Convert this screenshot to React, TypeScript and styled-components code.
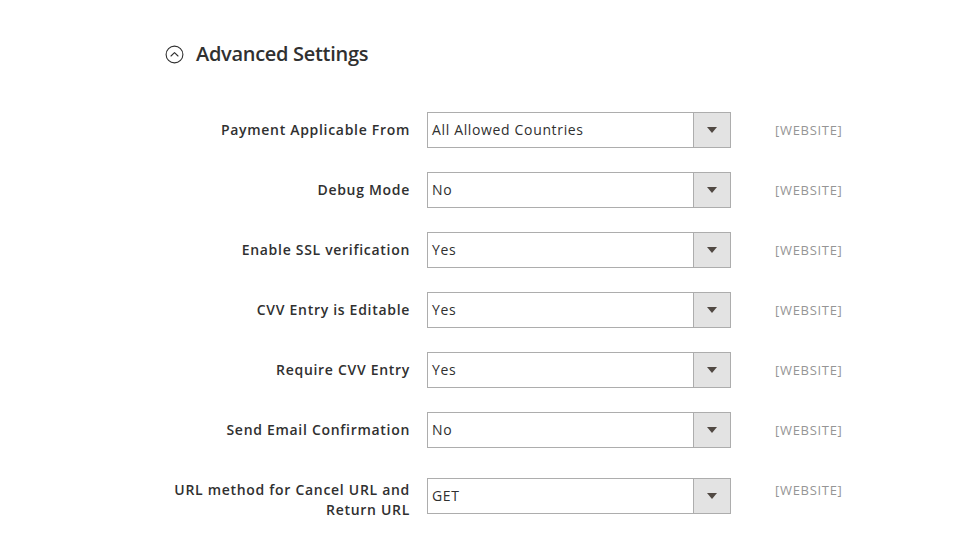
import React from "react";
import styled, { createGlobalStyle } from "styled-components";

const GlobalStyle = createGlobalStyle`
  html, body { margin: 0; padding: 0; background: #ffffff; }
  body { font-family: "Open Sans", "Noto Sans", sans-serif; color: #303030; }
  * { box-sizing: border-box; }
`;

const Page = styled.div`
  width: 954px;
  height: 558px;
  padding: 40px 0 0 160px;
  overflow: hidden;
`;

const Heading = styled.div`
  display: flex;
  align-items: center;
  gap: 12px;
  padding-left: 5px;
  font-size: 20px;
  line-height: 28px;
  font-weight: 600;
  letter-spacing: -0.3px;
  color: #303030;
`;

const Form = styled.div`
  display: flex;
  flex-direction: column;
  gap: 24px;
  margin-top: 44px;
`;

const Row = styled.div`
  display: flex;
  align-items: flex-start;
`;

const Label = styled.label`
  width: 250px;
  padding-top: 8px;
  text-align: right;
  font-size: 14px;
  line-height: 20px;
  font-weight: 600;
  letter-spacing: 0.7px;
  color: #303030;
`;

const Select = styled.div`
  align-self: center;
  margin-left: 17px;
  width: 304px;
  height: 36px;
  display: flex;
  border: 1px solid #adadad;
  background: #ffffff;
`;

const Value = styled.div`
  flex: 1;
  padding: 7px 4px 0 4px;
  font-size: 14px;
  line-height: 20px;
  letter-spacing: 0.65px;
  color: #303030;
`;

const Button = styled.div`
  width: 37px;
  border-left: 1px solid #adadad;
  background: #e3e3e3;
  display: flex;
  align-items: center;
  justify-content: center;
`;

const Arrow = styled.span`
  width: 0;
  height: 0;
  border-left: 5px solid transparent;
  border-right: 5px solid transparent;
  border-top: 6px solid #514943;
`;

const Scope = styled.div`
  margin-left: 44px;
  padding-top: 8px;
  font-size: 13px;
  line-height: 20px;
  letter-spacing: 0.7px;
  color: #959595;
`;

const rows = [
  { label: "Payment Applicable From", value: "All Allowed Countries" },
  { label: "Debug Mode", value: "No" },
  { label: "Enable SSL verification", value: "Yes" },
  { label: "CVV Entry is Editable", value: "Yes" },
  { label: "Require CVV Entry", value: "Yes" },
  { label: "Send Email Confirmation", value: "No" },
  { label: "URL method for Cancel URL and Return URL", value: "GET" },
];

const CollapseIcon = () => (
  <svg width="19" height="19" viewBox="0 0 19 19" fill="none">
    <circle cx="9.5" cy="9.5" r="8.4" stroke="#303030" strokeWidth="1.1" />
    <path d="M6 11 L9.5 7.6 L13 11" stroke="#303030" strokeWidth="1.1" strokeLinecap="round" strokeLinejoin="round" />
  </svg>
);

export default function App() {
  return (
    <>
      <GlobalStyle />
      <Page>
        <Heading>
          <CollapseIcon />
          <span>Advanced Settings</span>
        </Heading>
        <Form>
          {rows.map((r) => (
            <Row key={r.label}>
              <Label>{r.label}</Label>
              <Select>
                <Value>{r.value}</Value>
                <Button>
                  <Arrow />
                </Button>
              </Select>
              <Scope>[WEBSITE]</Scope>
            </Row>
          ))}
        </Form>
      </Page>
    </>
  );
}
